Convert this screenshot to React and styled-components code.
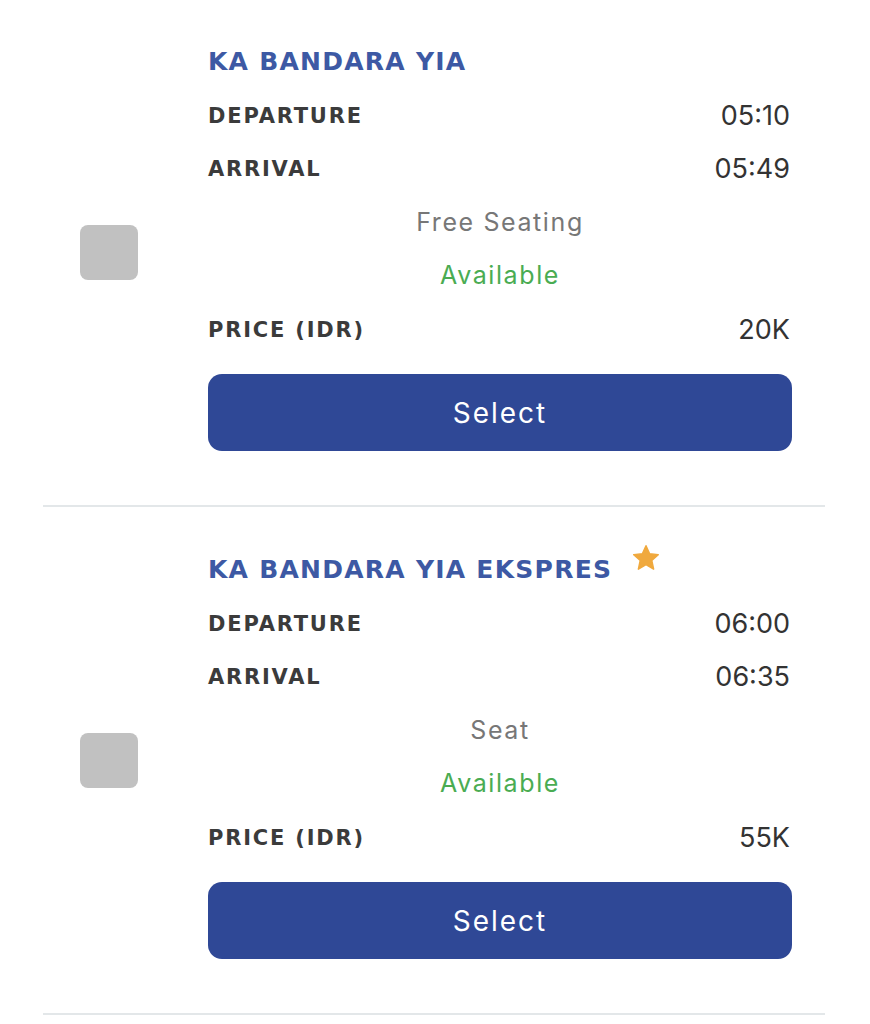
import React from 'react';
import styled, { createGlobalStyle } from 'styled-components';

const GlobalStyle = createGlobalStyle`
  body {
    margin: 0;
    background: #fff;
    font-family: Inter, Roboto, "Liberation Sans", sans-serif;
  }
`;

const Page = styled("div")`
  width: 870px;
  display: flex;
  flex-direction: column;
  padding-left: 43px;
  box-sizing: border-box;
`;

const Card = styled("div")`
  width: 782px;
  display: flex;
  align-items: center;
  padding: 35px 33px 54px 37px;
  box-sizing: border-box;
  border-bottom: 2px solid #e3e7e9;
  & + & {
    padding-top: 36px;
  }
`;

const Check = styled("div")`
  width: 58px;
  height: 55px;
  border-radius: 8px;
  background: #c1c1c1;
  flex-shrink: 0;
  margin: 18px 70px 0 0;
`;

const Body = styled("div")`
  flex: 1;
  display: flex;
  flex-direction: column;
`;

const Title = styled("div")`
  height: 53px;
  display: flex;
  align-items: center;
  font-family: "DejaVu Sans", sans-serif;
  font-weight: 700;
  font-size: 25px;
  letter-spacing: 1.25px;
  color: #3d59a4;
`;

const Star = styled("svg")`
  width: 30px;
  height: 30px;
  margin-left: 19px;
  margin-top: -24px;
`;

const Row = styled("div")`
  height: 53px;
  display: flex;
  align-items: center;
  justify-content: ${p => (p.center ? "center" : "space-between")};
  margin-top: ${p => p.gap || 0}px;
`;

const Label = styled("span")`
  font-family: "DejaVu Sans", sans-serif;
  font-weight: 700;
  font-size: 21px;
  letter-spacing: 1.8px;
  color: #3b3b3b;
`;

const Value = styled("span")`
  font-size: 27px;
  color: #333;
  margin-right: 2px;
`;

const Info = styled("span")`
  font-size: 25px;
  letter-spacing: 1.6px;
  color: ${p => p.color || "#777"};
`;

const Button = styled("button")`
  margin-top: 18px;
  height: 77px;
  width: 100%;
  border: none;
  border-radius: 14px;
  background: #2f4896;
  color: #fff;
  font-family: Inter, Roboto, "Liberation Sans", sans-serif;
  font-size: 28px;
  letter-spacing: 2px;
  cursor: pointer;
`;

const trains = [
  { name: "KA BANDARA YIA", dep: "05:10", arr: "05:49", seat: "Free Seating", price: "20K" },
  { name: "KA BANDARA YIA EKSPRES", dep: "06:00", arr: "06:35", seat: "Seat", price: "55K", star: true },
];

const App = () => {
  return (
    <Page>
      <GlobalStyle />
      {trains.map(t => (
        <Card key={t.name}>
          <Check />
          <Body>
            <Title>
              {t.name}
              {t.star && (
                <Star viewBox="0 0 24 24">
                  <path
                    d="M12 2.2l2.9 6.4 6.9.7-5.2 4.7 1.5 6.9L12 17.3l-6.1 3.6 1.5-6.9-5.2-4.7 6.9-.7z"
                    fill="#f0a93e"
                    stroke="#f0a93e"
                    strokeWidth="1.2"
                    strokeLinejoin="round"
                  />
                </Star>
              )}
            </Title>
            <Row gap={1}>
              <Label>DEPARTURE</Label>
              <Value>{t.dep}</Value>
            </Row>
            <Row>
              <Label>ARRIVAL</Label>
              <Value>{t.arr}</Value>
            </Row>
            <Row center>
              <Info>{t.seat}</Info>
            </Row>
            <Row center>
              <Info color="#4aac52">Available</Info>
            </Row>
            <Row gap={2}>
              <Label>PRICE (IDR)</Label>
              <Value>{t.price}</Value>
            </Row>
            <Button>Select</Button>
          </Body>
        </Card>
      ))}
    </Page>
  );
};

export default App;
